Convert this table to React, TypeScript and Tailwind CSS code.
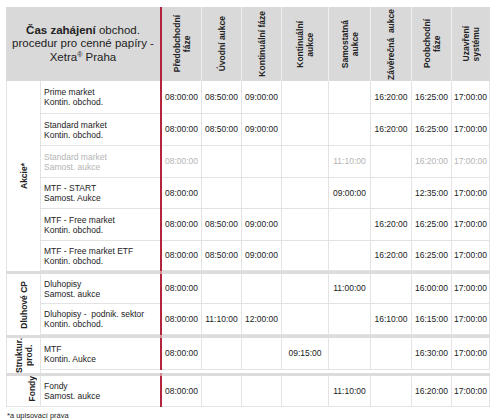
import React from 'react'

type RowData = {
  name: string
  sub: string
  times: string[]
  h: string
  muted?: boolean
}

type Section = {
  label: React.ReactNode
  labelBox: string
  labelW: string
  rows: RowData[]
}

const COLS = ['w-[40px]', 'w-[40px]', 'w-[40px]', 'w-[47px]', 'w-[42px]', 'w-[41px]', 'w-[40px]', 'w-[38px]']

const HEADS: React.ReactNode[] = [
  <>Předobchodní<br />fáze</>,
  <>Úvodní aukce</>,
  <>Kontinuální fáze</>,
  <>Kontinuální<br />aukce</>,
  <>Samostatná<br />aukce</>,
  <>Závěrečná&nbsp; aukce</>,
  <>Poobchodní<br />fáze</>,
  <>Uzavření<br />systému</>,
]

const KONTIN = ['08:00:00', '08:50:00', '09:00:00', '', '', '16:20:00', '16:25:00', '17:00:00']

const SECTIONS: Section[] = [
  {
    label: <>Akcie*</>,
    labelBox: 'items-center justify-center',
    labelW: '',
    rows: [
      { name: 'Prime market', sub: 'Kontin. obchod.', times: KONTIN, h: 'h-[33px]' },
      { name: 'Standard market', sub: 'Kontin. obchod.', times: KONTIN, h: 'h-[32px]' },
      {
        name: 'Standard market',
        sub: 'Samost. aukce',
        times: ['08:00:00', '', '', '', '11:10:00', '', '16:20:00', '17:00:00'],
        h: 'h-[32px]',
        muted: true,
      },
      {
        name: 'MTF - START',
        sub: 'Samost. Aukce',
        times: ['08:00:00', '', '', '', '09:00:00', '', '12:35:00', '17:00:00'],
        h: 'h-[31px]',
      },
      { name: 'MTF - Free market', sub: 'Kontin. obchod.', times: KONTIN, h: 'h-[32px]' },
      { name: 'MTF - Free market ETF', sub: 'Kontin. obchod.', times: KONTIN, h: 'h-[30px]' },
    ],
  },
  {
    label: <>Dluhové CP</>,
    labelBox: 'items-center justify-center',
    labelW: '',
    rows: [
      {
        name: 'Dluhopisy',
        sub: 'Samost. aukce',
        times: ['08:00:00', '', '', '', '11:00:00', '', '16:00:00', '17:00:00'],
        h: 'h-[30px]',
      },
      {
        name: 'Dluhopisy -\u00a0 podnik. sektor',
        sub: 'Kontin. obchod.',
        times: ['08:00:00', '11:10:00', '12:00:00', '', '', '16:10:00', '16:15:00', '17:00:00'],
        h: 'h-[31px]',
      },
    ],
  },
  {
    label: <>Struktur.<br />prod.</>,
    labelBox: 'items-center justify-center',
    labelW: '',
    rows: [
      {
        name: 'MTF',
        sub: 'Kontin. Aukce',
        times: ['08:00:00', '', '', '09:15:00', '', '', '16:30:00', '17:00:00'],
        h: 'h-[32px]',
      },
    ],
  },
  {
    label: <>Fondy</>,
    // label sits top-right in the source
    labelBox: 'items-start justify-start pl-[20px]',
    labelW: 'w-[10px]',
    rows: [
      {
        name: 'Fondy',
        sub: 'Samost. aukce',
        times: ['08:00:00', '', '', '', '11:10:00', '', '16:20:00', '17:00:00'],
        h: 'h-[31px]',
      },
    ],
  },
]

function Row({ row }: { row: RowData }) {
  const tone = row.muted ? 'text-[#b4b4b4]' : 'text-[#222]'
  return (
    <div className={`flex ${row.h}`}>
      <div
        className={`w-[119px] border-b border-[#e3e3e3] flex flex-col justify-center pl-[3px] text-[8.5px] leading-[10px] whitespace-nowrap ${tone}`}
      >
        <span>{row.name}</span>
        <span>{row.sub}</span>
      </div>
      <div className="w-[2px] bg-[#b3253c]" />
      {row.times.map((t, i) => (
        <div
          key={i}
          className={`${COLS[i]} border-b border-r border-[#e3e3e3] flex items-center justify-center text-[8.5px] ${tone}`}
        >
          {t}
        </div>
      ))}
    </div>
  )
}

function Separator() {
  return (
    <div className="flex h-[3px] bg-[#dcdcdc]">
      <div className="w-[154px]" />
      <div className="w-[2px] bg-[#d58f9a]" />
    </div>
  )
}

export default function App() {
  return (
    <div className="w-[500px] h-[420px] bg-white font-['Liberation_Sans',Arial,sans-serif] text-[#222] pt-[7px] pl-[6px]">
      <div className="w-[484px]">
        {/* header */}
        <div className="flex h-[74px] bg-[#d9d9d9]">
          <div className="w-[154px] flex items-center justify-center text-center text-[11.5px] leading-[13.5px]">
            <p>
              <b>Čas zahájení</b> obchod.
              <br />
              procedur pro cenné papíry -
              <br />
              Xetra<sup className="text-[7px]">®</sup> Praha
            </p>
          </div>
          <div className="w-[2px] bg-[#b3253c]" />
          {HEADS.map((h, i) => (
            <div
              key={i}
              className={`${COLS[i]} ${i < 7 ? 'border-r border-[#eeeeee]' : ''} flex items-center justify-center`}
            >
              <span className="[writing-mode:vertical-rl] rotate-180 text-center font-bold text-[8.5px] leading-[10px] whitespace-nowrap">
                {h}
              </span>
            </div>
          ))}
        </div>

        {SECTIONS.map((s, si) => (
          <React.Fragment key={si}>
            {si > 0 && <Separator />}
            <div className="flex">
              <div
                className={`w-[35px] shrink-0 border-l border-r border-[#e3e3e3] flex ${s.labelBox} ${si === SECTIONS.length - 1 ? 'border-b' : ''}`}
              >
                <span
                  className={`${s.labelW} [writing-mode:vertical-rl] rotate-180 text-center font-bold text-[8.5px] leading-[10px] whitespace-nowrap`}
                >
                  {s.label}
                </span>
              </div>
              <div className="flex flex-col">
                {s.rows.map((r, ri) => (
                  <Row key={ri} row={r} />
                ))}
              </div>
            </div>
          </React.Fragment>
        ))}

        <p className="pt-[4px] pl-[1px] text-[7.5px] leading-[9px] text-[#222]">*a upisovací práva</p>
      </div>
    </div>
  )
}
